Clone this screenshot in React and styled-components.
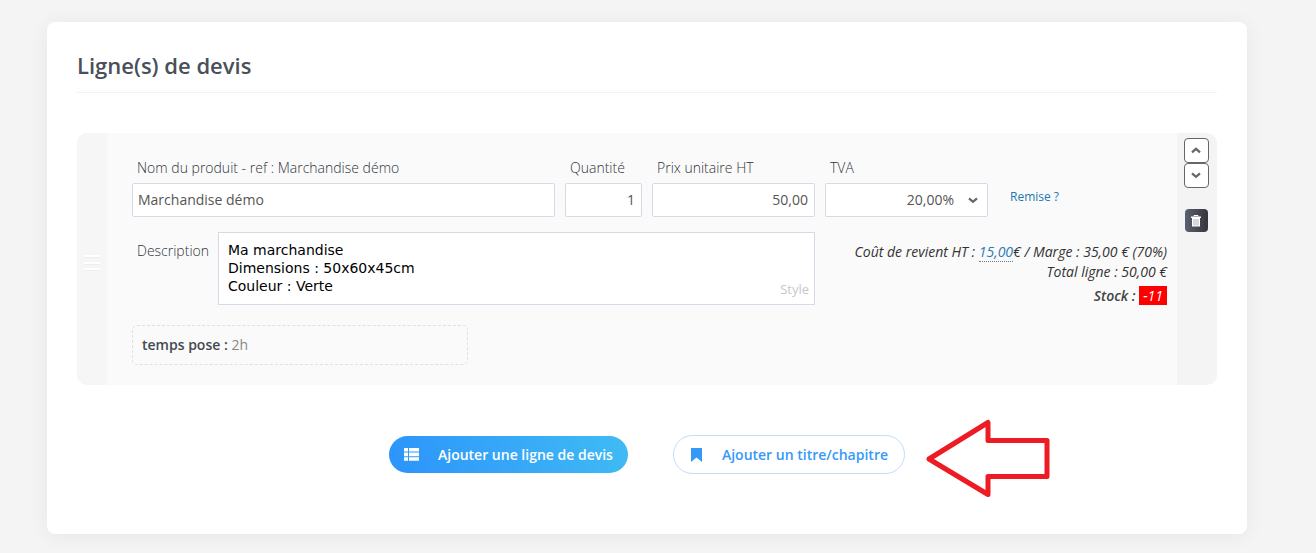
import React from "react";
import styled, { createGlobalStyle, css } from "styled-components";

const GlobalStyle = createGlobalStyle`
  *, *::before, *::after { box-sizing: border-box; }
  body {
    margin: 0;
    background: #f4f4f4;
    color: #495057;
    font-family: "Open Sans", "Noto Sans", sans-serif;
    font-size: 14px;
    line-height: 20px;
  }
  button, input, select, textarea { font: inherit; color: inherit; margin: 0; }
`;

const Page = styled.main`
  padding: 22px 69px 19px 47px;
`;

const Card = styled.section`
  padding: 30px 30px 60px;
  background: #fff;
  border-radius: 8px;
  box-shadow: 0 2px 20px rgba(0, 0, 0, 0.06);
`;

const Title = styled.h2`
  margin: 0 0 40px;
  padding-bottom: 14px;
  border-bottom: 1px solid #f2f2f2;
  font-size: 22px;
  font-weight: 600;
  line-height: 26px;
  color: #4a4f59;
`;

const QuoteLine = styled.article`
  display: flex;
  border-radius: 10px;
  overflow: hidden;
  background: #fafafa;
`;

const Handle = styled.div`
  flex: 0 0 30px;
  display: flex;
  align-items: center;
  justify-content: center;
  padding-top: 8px;
  background: #f6f6f6;
`;

const LineBody = styled.div`
  flex: 1;
  min-width: 0;
  padding: 24px 10px 20px 25px;
`;

const LineActions = styled.div`
  flex: 0 0 40px;
  display: flex;
  flex-direction: column;
  align-items: center;
  padding: 5px 2px 0 0;
  background: #f4f4f4;
`;

const FieldGrid = styled.div`
  display: grid;
  grid-template-columns: 423fr 77fr 163fr 163fr 169fr;
  column-gap: 10px;
`;

const Field = styled.div`
  display: flex;
  flex-direction: column;
  min-width: 0;
`;

const Label = styled.label`
  padding: 0 5px;
  height: 26px;
  line-height: 22px;
  font-weight: 300;
  color: #30353c;
  white-space: nowrap;
`;

const control = css`
  width: 100%;
  height: 34px;
  padding: 0 6px 2px 5px;
  border: 1px solid #d8d8e6;
  border-radius: 2px;
  background: #fff;
  color: #555;
  outline: none;
`;

const TextInput = styled.input`
  ${control}
  text-align: ${(p) => p.$align || "left"};
`;

const SelectWrap = styled.div`
  position: relative;
`;

const Select = styled.select`
  ${control}
  appearance: none;
  padding: 0 33px 0 5px;
  text-align: right;
  text-align-last: right;
`;

const SelectArrow = styled.span`
  position: absolute;
  right: 10px;
  top: 0;
  height: 34px;
  display: flex;
  align-items: center;
  pointer-events: none;
`;

const Discount = styled.a`
  align-self: start;
  margin: 30px 0 0 12px;
  font-size: 12px;
  line-height: 20px;
  color: #1a78b4;
  text-decoration: none;
`;

const DetailRow = styled.div`
  display: grid;
  grid-template-columns: 683fr 352fr;
  margin: 15px 0 20px;
`;

const Description = styled.div`
  display: flex;
`;

const DescriptionLabel = styled(Label)`
  flex: 0 0 86px;
  padding-top: 8px;
`;

const EditorWrap = styled.div`
  position: relative;
  flex: 1;
  display: flex;
`;

const Editor = styled.textarea`
  width: 100%;
  height: 73px;
  padding: 8px 9px;
  border: 1px solid #d8d8e6;
  border-radius: 0;
  background: #fff;
  color: #000;
  font-family: "DejaVu Sans", sans-serif;
  font-size: 14px;
  line-height: 18px;
  resize: none;
  overflow: hidden;
  outline: none;
`;

const StyleButton = styled.button`
  position: absolute;
  right: 6px;
  bottom: 6px;
  padding: 0;
  border: 0;
  background: none;
  font-size: 13px;
  line-height: 20px;
  color: #c8c8c8;
`;

const Costs = styled.div`
  padding-top: 10px;
  text-align: right;
  font-style: italic;
  color: #333;
  white-space: nowrap;
`;

const CostLink = styled.a`
  color: #2a7ab8;
  text-decoration: none;
  border-bottom: 1px dotted #777;
`;

const Stock = styled.div`
  margin-top: 4px;
  font-weight: 600;
  line-height: 19px;
  color: #444;
`;

const StockValue = styled.span`
  padding: 0 4px;
  background: #f00;
  color: #fff;
  font-weight: 500;
`;

const Extra = styled.div`
  width: 336px;
  max-width: 100%;
  padding: 9px;
  border: 1px dashed #e0e0e0;
  border-radius: 5px;
  color: #888;
  strong { font-weight: 600; color: #444950; }
`;

const MoveButton = styled.button`
  width: 25px;
  height: 25px;
  padding: 0;
  border: 1px solid #666;
  border-radius: 4px;
  background: #fff;
  display: flex;
  align-items: center;
  justify-content: center;
`;

const DeleteButton = styled.button`
  width: 23px;
  height: 23px;
  margin-top: 21px;
  padding: 0;
  border: 0;
  border-radius: 4px;
  background: linear-gradient(90deg, #5c6072, #35353a);
  display: flex;
  align-items: center;
  justify-content: center;
`;

const Actions = styled.div`
  position: relative;
  display: flex;
  justify-content: center;
  align-items: center;
  gap: 45px;
  margin-top: 50px;
`;

const PillButton = styled.button`
  display: flex;
  align-items: center;
  height: ${(p) => (p.$primary ? 37 : 39)}px;
  padding: ${(p) => (p.$primary ? "0 15px" : "0 16px")};
  gap: 19px;
  border: ${(p) => (p.$primary ? "0" : "1px solid #bfdefc")};
  border-radius: 20px;
  background: ${(p) => (p.$primary ? "linear-gradient(60deg, #2c93fb, #40bcf4)" : "#fff")};
  color: ${(p) => (p.$primary ? "#fff" : "#3699f8")};
  font-weight: 600;
  white-space: nowrap;
`;

const Pointer = styled.svg`
  position: absolute;
  left: calc(50% + 278px);
  top: -17px;
`;

const Chevron = ({ up }) => (
  <svg width="10" height="7" viewBox="0 0 10 7" fill="none" stroke="#666" strokeWidth="2.2" aria-hidden="true">
    <path d={up ? "M1 5.3 5 1.8 9 5.3" : "M1 1.4 5 4.9 9 1.4"} />
  </svg>
);

export default function App() {
  return (
    <>
      <GlobalStyle />
      <Page>
        <Card>
          <Title>Ligne(s) de devis</Title>
          <QuoteLine>
            <Handle>
              <svg width="18" height="18" viewBox="0 0 18 18" aria-hidden="true">
                <path d="M1 3h16v1H1zM1 10h16v1H1zM1 16h16v1H1z" fill="#eeeeee" />
                <path d="M1 1h16v2H1zM1 8h16v2H1zM1 14h16v2H1z" fill="#fff" />
              </svg>
            </Handle>
            <LineBody>
              <FieldGrid>
                <Field>
                  <Label htmlFor="product">Nom du produit - ref : Marchandise démo</Label>
                  <TextInput id="product" defaultValue="Marchandise démo" />
                </Field>
                <Field>
                  <Label htmlFor="quantity">Quantité</Label>
                  <TextInput id="quantity" $align="right" defaultValue="1" />
                </Field>
                <Field>
                  <Label htmlFor="price">Prix unitaire HT</Label>
                  <TextInput id="price" $align="right" defaultValue="50,00" />
                </Field>
                <Field>
                  <Label htmlFor="vat">TVA</Label>
                  <SelectWrap>
                    <Select id="vat" defaultValue="20">
                      <option value="20">20,00%</option>
                    </Select>
                    <SelectArrow>
                      <Chevron />
                    </SelectArrow>
                  </SelectWrap>
                </Field>
                <Discount href="#remise">Remise ?</Discount>
              </FieldGrid>

              <DetailRow>
                <Description>
                  <DescriptionLabel htmlFor="description">Description</DescriptionLabel>
                  <EditorWrap>
                    <Editor
                      id="description"
                      spellCheck={false}
                      defaultValue={"Ma marchandise\nDimensions : 50x60x45cm\nCouleur : Verte"}
                    />
                    <StyleButton type="button">Style</StyleButton>
                  </EditorWrap>
                </Description>
                <Costs>
                  <div>
                    Coût de revient HT : <CostLink href="#cout">15,00</CostLink>€ / Marge : 35,00 € (70%)
                  </div>
                  <div>Total ligne : 50,00 €</div>
                  <Stock>
                    Stock : <StockValue>-11</StockValue>
                  </Stock>
                </Costs>
              </DetailRow>

              <Extra>
                <strong>temps pose :</strong> 2h
              </Extra>
            </LineBody>
            <LineActions>
              <MoveButton type="button" aria-label="Monter">
                <Chevron up />
              </MoveButton>
              <MoveButton type="button" aria-label="Descendre">
                <Chevron />
              </MoveButton>
              <DeleteButton type="button" aria-label="Supprimer">
                <svg width="10" height="12" viewBox="0 0 10 12" aria-hidden="true">
                  <path d="M3 1.5V.5h4v1" fill="none" stroke="#fff" />
                  <path d="M0 1.5h10V3H0zM1 3h8v8.5H1z" fill="#fff" />
                  <path d="M3 4v6.500M5 4v6.500M7 4v6.500" stroke="#9a9aac" strokeWidth="0.8" />
                </svg>
              </DeleteButton>
            </LineActions>
          </QuoteLine>

          <Actions>
            <PillButton type="button" $primary>
              <svg width="15" height="13" viewBox="0 0 15 13" fill="#fff" aria-hidden="true">
                <path d="M0 0h4v3.6H0zM5 0h10v3.6H5zM0 4.6h4v3.6H0zM5 4.6h10v3.6H5zM0 9.2h4v3.6H0zM5 9.2h10v3.6H5z" />
              </svg>
              Ajouter une ligne de devis
            </PillButton>
            <PillButton type="button">
              <svg width="13" height="14" viewBox="0 0 13 14" fill="#3699f8" aria-hidden="true">
                <path d="M1 0h11v14L6.500 9.500 1 14z" />
              </svg>
              Ajouter un titre/chapitre
            </PillButton>
            <Pointer width="126" height="80" viewBox="0 0 126 80" fill="none" aria-hidden="true">
              <path
                d="M4 41 63 4.500V22.500H122V58.500H63V76.500Z"
                stroke="#ed1c24"
                strokeWidth="5"
                strokeLinejoin="round"
              />
            </Pointer>
          </Actions>
        </Card>
      </Page>
    </>
  );
}
